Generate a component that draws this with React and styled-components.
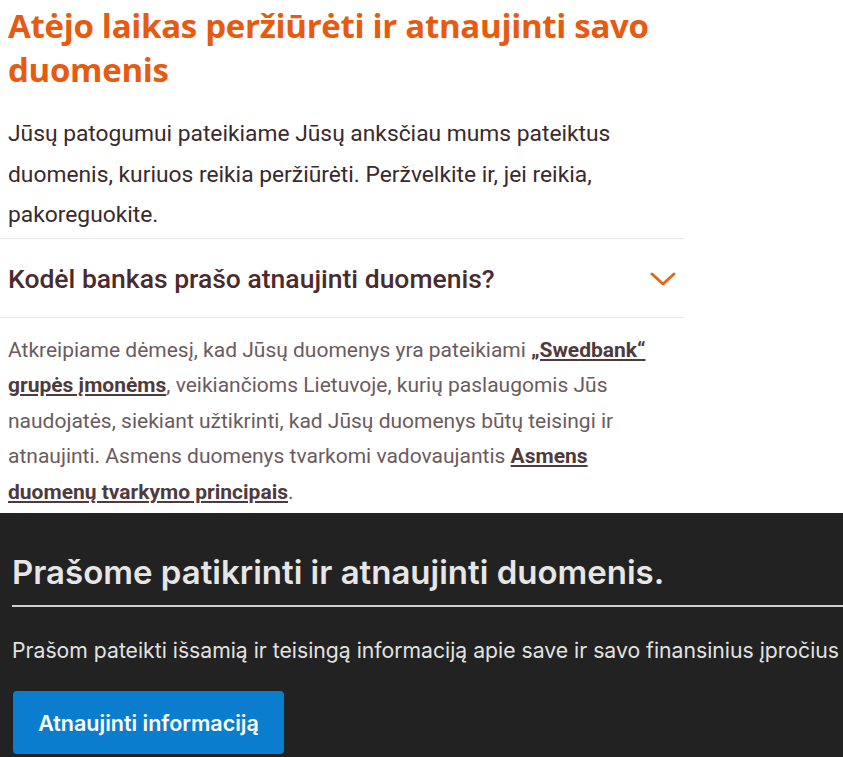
import styled, { createGlobalStyle } from 'styled-components';

const GlobalStyle = createGlobalStyle`
  body {
    margin: 0;
    background: #fff;
    font-family: Roboto, "Liberation Sans", sans-serif;
  }
`;

const Page = styled.div`
  width: 843px;
  height: 757px;
  overflow: hidden;
  display: flex;
  flex-direction: column;
`;

const Intro = styled.section`
  width: 684px;
`;

const Title = styled.h1`
  margin: 0;
  padding: 4px 8px 0;
  font-family: "Open Sans", sans-serif;
  font-size: 33px;
  font-weight: 700;
  line-height: 44px;
  color: #e85a10;
  letter-spacing: -0.3px;
`;

const Lead = styled.p`
  margin: 0;
  padding: 22px 8px 2px;
  font-size: 22.8px;
  line-height: 40.5px;
  color: #3a2a2c;
`;

const AccordionHead = styled.div`
  display: flex;
  align-items: center;
  justify-content: space-between;
  box-sizing: border-box;
  height: 80px;
  padding: 2px 8px 0;
  border-top: 1px solid #e6e6e6;
  border-bottom: 1px solid #e6e6e6;
`;

const AccordionTitle = styled.h2`
  margin: 0;
  font-size: 26.5px;
  font-weight: 500;
  color: #4a2b2e;
`;

const Chevron = styled.svg`
  width: 26px;
  height: 16px;
`;

const Body = styled.p`
  margin: 0;
  padding: 15px 8px 0;
  font-size: 21px;
  line-height: 35.6px;
  color: #6b5b5e;
`;

const Link = styled.a`
  font-weight: 700;
  color: #4f3a3d;
  text-decoration: underline;
  text-underline-offset: 2px;
`;

const Dark = styled.section`
  margin-top: 3px;
  flex: 1;
  background: #222222;
  padding: 0 0 0 12px;
`;

const DarkTitle = styled.h2`
  margin: 0;
  padding: 39px 0 13px;
  font-family: Inter, sans-serif;
  font-size: 33px;
  line-height: 40px;
  font-weight: 600;
  color: #e6e6e6;
  border-bottom: 2px solid #d0d0d0;
`;

const DarkText = styled.p`
  margin: 0;
  padding: 30px 0 0;
  font-family: Inter, sans-serif;
  font-size: 21.2px;
  line-height: 26px;
  color: #e2e2e2;
  white-space: nowrap;
`;

const Button = styled.button`
  display: block;
  margin: 28px 0 0 1px;
  width: 271px;
  height: 63px;
  border: none;
  border-radius: 4px;
  background: #0b7dcf;
  color: #fff;
  font-family: Inter, sans-serif;
  font-size: 21.5px;
  font-weight: 600;
`;

export default function App() {
  return (
    <Page>
      <GlobalStyle />
      <Intro>
        <Title>Atėjo laikas peržiūrėti ir atnaujinti savo duomenis</Title>
        <Lead>
          Jūsų patogumui pateikiame Jūsų anksčiau mums pateiktus duomenis, kuriuos reikia peržiūrėti. Peržvelkite ir, jei reikia, pakoreguokite.
        </Lead>
        <AccordionHead>
          <AccordionTitle>Kodėl bankas prašo atnaujinti duomenis?</AccordionTitle>
          <Chevron viewBox="0 0 26 16">
            <path d="M2 3l11 10L24 3" fill="none" stroke="#e0661c" strokeWidth="3" strokeLinecap="round" strokeLinejoin="round" />
          </Chevron>
        </AccordionHead>
        <Body>
          Atkreipiame dėmesį, kad Jūsų duomenys yra pateikiami <Link>„Swedbank“ grupės įmonėms</Link>, veikiančioms Lietuvoje, kurių paslaugomis Jūs naudojatės, siekiant užtikrinti, kad Jūsų duomenys būtų teisingi ir atnaujinti. Asmens duomenys tvarkomi vadovaujantis <Link>Asmens duomenų tvarkymo principais</Link>.
        </Body>
      </Intro>
      <Dark>
        <DarkTitle>Prašome patikrinti ir atnaujinti duomenis.</DarkTitle>
        <DarkText>Prašom pateikti išsamią ir teisingą informaciją apie save ir savo finansinius įpročius</DarkText>
        <Button>Atnaujinti informaciją</Button>
      </Dark>
    </Page>
  );
}
